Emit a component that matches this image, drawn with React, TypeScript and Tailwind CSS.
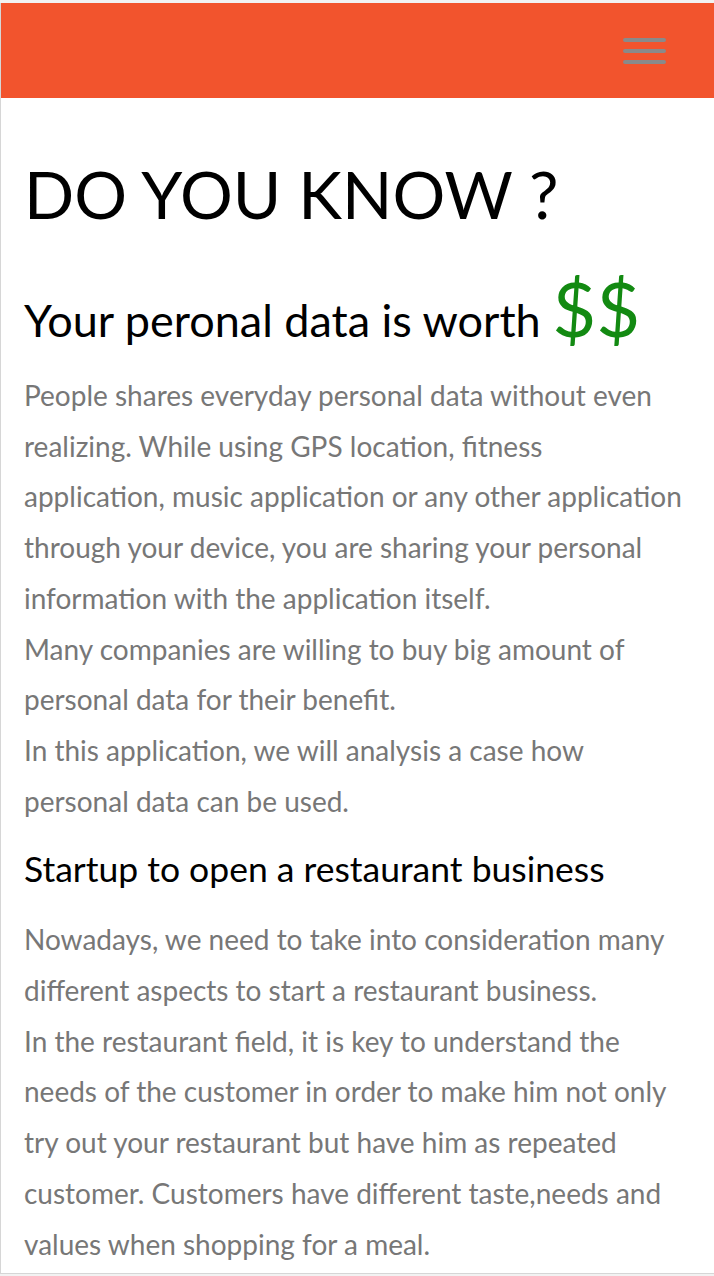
const App = () => {
  return (
    <div
      className="min-h-screen bg-[#f2f2f2] pt-[3px]"
      style={{ fontFamily: "Lato, 'Open Sans', sans-serif" }}
    >
      <div className="w-[730px] border-l border-b border-[#d6d6d6] bg-white pb-[4px]">
        <header className="flex h-[95px] items-start justify-end bg-[#f2542d] pr-[64px] pt-[35px]">
          <button className="flex w-[43px] flex-col gap-[7px]" aria-label="menu">
            <span className="block h-[4px] rounded-full bg-[#8a8a8a]" />
            <span className="block h-[4px] rounded-full bg-[#8a8a8a]" />
            <span className="block h-[4px] rounded-full bg-[#8a8a8a]" />
          </button>
        </header>
        <main className="w-[714px] pl-[23px] pr-[28px]">
          <h1 className="mt-[56px] text-[66px] leading-[80px] font-normal text-black">
            DO YOU KNOW ?
          </h1>
          <h2 className="mt-[44px] text-[45px] leading-[60px] font-normal text-black">
            Your peronal data is worth{" "}
            <span className="text-[76px] leading-[60px] text-[#138a12]">$$</span>
          </h2>
          <p className="mt-[20px] text-[28px] leading-[50.7px] text-[#777]">
            People shares everyday personal data without even realizing. While
            using GPS location, fitness application, music application or any
            other application through your device, you are sharing your personal
            information with the application itself.
            <br />
            Many companies are willing to buy big amount of personal data for
            their benefit.
            <br />
            In this application, we will analysis a case how personal data can
            be used.
          </p>
          <h3 className="mt-[19px] text-[35.5px] leading-[48px] font-normal text-black">
            Startup to open a restaurant business
          </h3>
          <p className="mt-[21px] text-[28px] leading-[50.7px] text-[#777]">
            Nowadays, we need to take into consideration many different aspects
            to start a restaurant business.
            <br />
            In the restaurant field, it is key to understand the needs of the
            customer in order to make him not only try out your restaurant but
            have him as repeated customer. Customers have different
            taste,needs and values when shopping for a meal.
          </p>
        </main>
      </div>
    </div>
  );
};

export default App;
